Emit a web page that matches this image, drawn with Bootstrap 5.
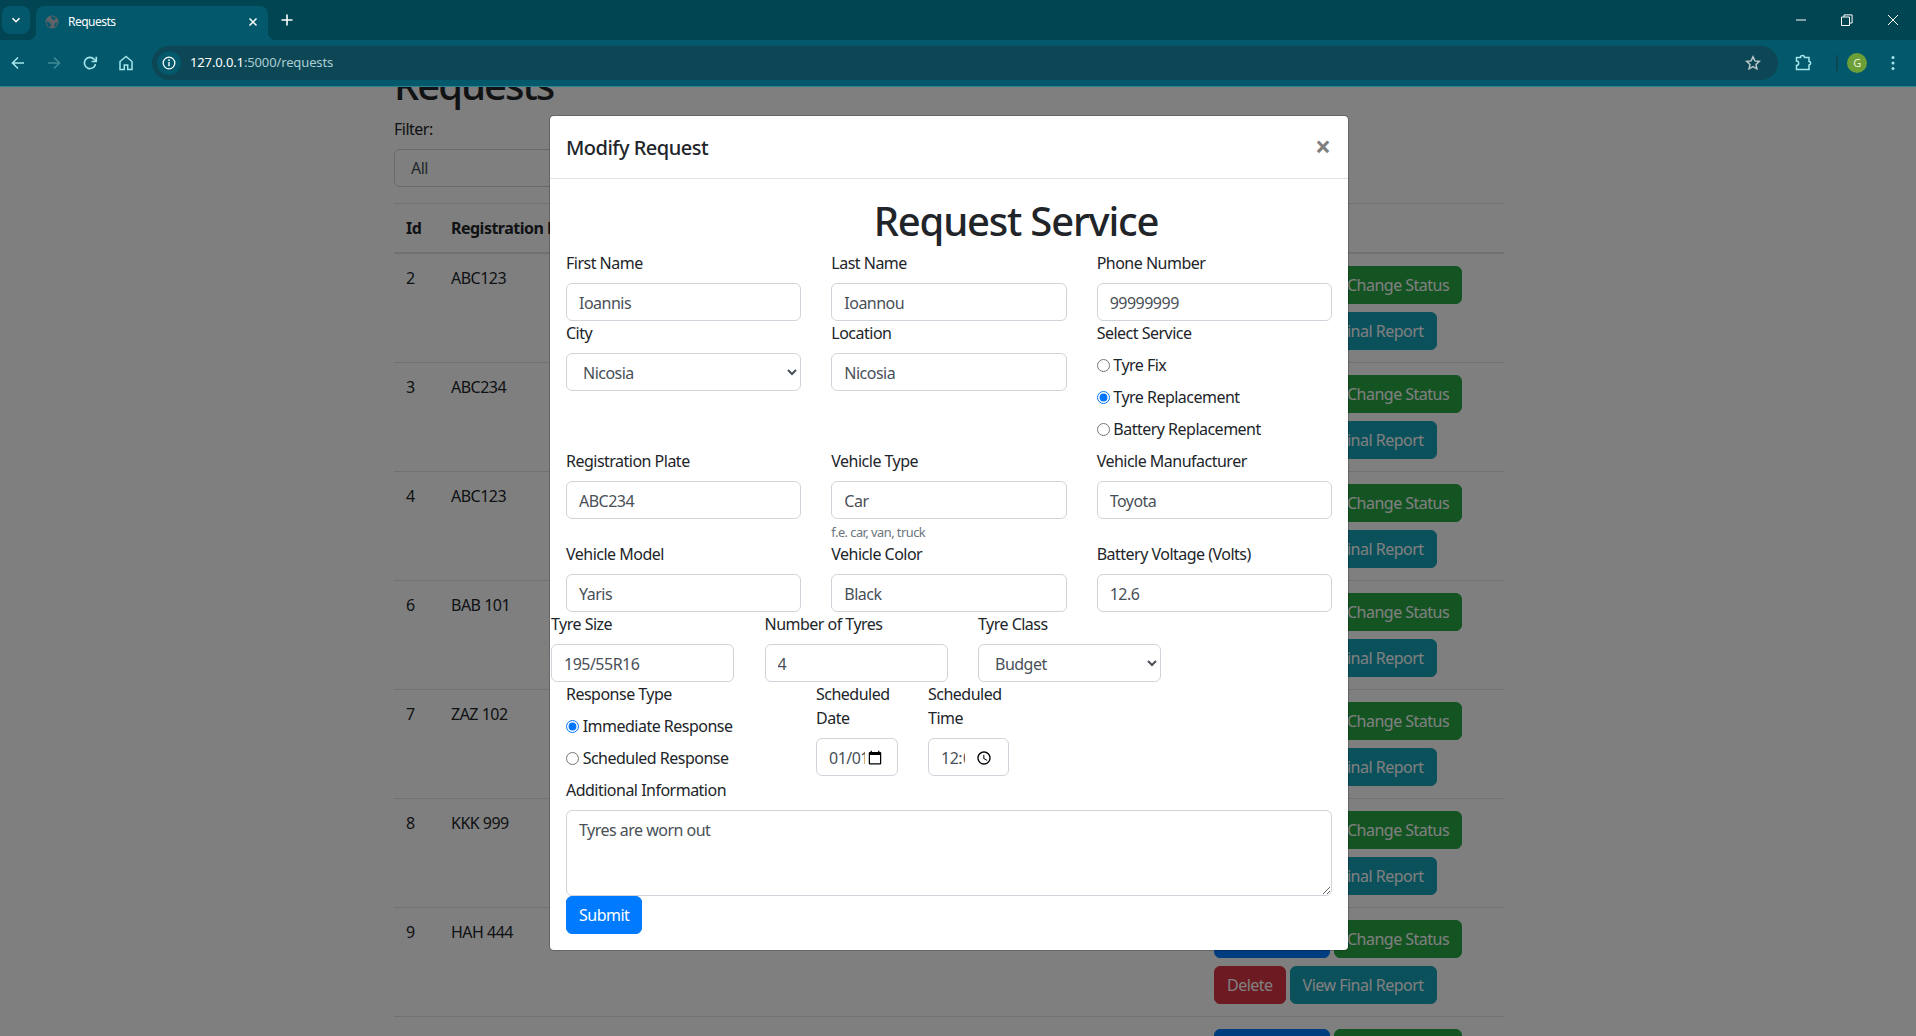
<!DOCTYPE html>
<html lang="en">
<head>
  <meta charset="UTF-8" />
  <meta name="viewport" content="width=device-width, initial-scale=1.0"/>
  <title>Requests</title>
  <link href="https://cdn.jsdelivr.net/npm/bootstrap@5.3.2/dist/css/bootstrap.min.css" rel="stylesheet" />
  <style>
    :root {
      --bs-body-font-family: "Noto Sans", "Open Sans", sans-serif;
      --bs-body-color: #212529;
      --bs-border-radius: .25rem;
      --bs-border-color: #dee2e6;
    }
    html, body { height: 100%; overflow: hidden; }
    body { letter-spacing: -.032em; }
    .form-control, .btn { letter-spacing: inherit; }
    .btn { white-space: nowrap; }

    /* browser frame */
    .win-tabs { height: 40px; background: #024552; color: #fff; }
    .tab-toggle { width: 28px; height: 28px; margin: 6px 6px 0 2px; border-radius: 8px; background: #03586b; }
    .win-tab { width: 232px; height: 34px; margin-top: 6px; padding: 0 9px 3px 9px; background: #03586b; border-radius: 8px 8px 0 0; font-size: 12px; position: relative; }
    .win-tab::before, .win-tab::after { content: ""; position: absolute; bottom: 0; width: 8px; height: 8px; }
    .win-tab::before { left: -8px; background: radial-gradient(circle at 0 0, transparent 8px, #03586b 8.5px); }
    .win-tab::after { right: -8px; background: radial-gradient(circle at 100% 0, transparent 8px, #03586b 8.5px); }
    .tab-label { margin-left: 9px; }
    .new-tab { margin-left: 5px; width: 28px; margin-top: 13px; }
    .win-btn { width: 46px; height: 40px; }
    .win-bar { height: 47px; background: #03586b; border-bottom: 1px solid #2b8291; }
    .bar-btn { width: 36px; height: 36px; }
    .bar-btn.home { margin-right: 8px; }
    .omni { height: 34px; width: 1626px; padding: 0 17px 0 5px; border-radius: 17px; background: #0d4755; }
    .omni-info { width: 24px; height: 24px; border-radius: 50%; background: #03586b; margin-right: 9px; }
    .omni-url { font-size: 13px; color: #a9cdd3; letter-spacing: -.01em; }
    .omni-url b { font-weight: 400; color: #fff; }
    .puzzle-btn { margin-left: 7px; }
    .bar-sep { width: 2px; height: 16px; background: #0d4755; margin: 0 9px 0 15px; }
    .avatar { width: 20px; height: 20px; border-radius: 50%; background: #6c9f38; color: #e8f3d8; font-size: 11px; }

    /* page behind the dialog */
    .page-view { position: relative; height: 949px; overflow: hidden; background: #fff; }
    .page-inner { width: 1898px; margin-top: -26px; }
    .page-box { width: 1140px; margin: 0 auto; padding: 0 15px; }
    .page-title { font-size: 40px; font-weight: 500; margin-bottom: 8px; line-height: 48px; letter-spacing: -.05em; }
    .filter-box { width: 400px; margin-bottom: 16px; }
    .req-table { table-layout: fixed; width: 1110px; margin: 0; }
    .req-table th, .req-table td { padding: 12px; border-top: 1px solid #dee2e6; border-bottom: 0; }
    .req-table thead th { border-bottom: 2px solid #dee2e6; }
    .req-table tr:last-child td:not(:last-child) { padding-top: 15px; }
    .col-id { width: 45px; }
    .col-act { width: 302px; }
    .act-line { display: flex; gap: 4px; }
    .act-line + .act-line { margin-top: 8px; }
    .btn-blue { --bs-btn-bg: #007bff; --bs-btn-border-color: #007bff; --bs-btn-hover-bg: #0069d9; --bs-btn-hover-border-color: #0062cc; --bs-btn-color: #fff; }
    .btn-green { --bs-btn-bg: #28a745; --bs-btn-border-color: #28a745; --bs-btn-color: #fff; }
    .btn-red { --bs-btn-bg: #dc3545; --bs-btn-border-color: #dc3545; --bs-btn-color: #fff; }
    .btn-teal { --bs-btn-bg: #17a2b8; --bs-btn-border-color: #17a2b8; --bs-btn-color: #fff; }
    .btn-edit { width: 116px; }

    /* dialog */
    .page-shade { position: absolute; inset: 0; background: rgba(0,0,0,.5); }
    .req-modal { position: absolute; width: 1898px; overflow: hidden; --bs-modal-width: 800px; --bs-modal-margin: 28px; --bs-modal-border-radius: .3rem; --bs-modal-border-color: rgba(0,0,0,.2); --bs-modal-header-border-color: #dee2e6; }
    .req-modal .modal-dialog { margin-top: 28px; }
    .req-modal .modal-header { padding: 17px 16px 15px; }
    .req-modal .modal-title { font-size: 20px; font-weight: 500; line-height: 30px; }
    .close-x { font-size: 28px; line-height: 24px; font-weight: 700; color: #7f7f7f; background: none; border: 0; padding: 0; margin: -5px 1px 0 auto; }
    .form-heading { font-size: 40px; font-weight: 500; line-height: 48px; margin: 0 0 6px 134px; padding-top: 2px; box-sizing: content-box; text-align: center; letter-spacing: -.03em; }
    .req-row { --bs-gutter-x: 30px; }
    .modal-body .form-control { padding-top: 7px; padding-bottom: 5px; }
    .form-control { color: #495057; border-color: #ced4da; }
    select.native-sel { appearance: auto; -webkit-appearance: auto; }
    .radio-line { height: 32px; }
    .radio-line input { vertical-align: -1px; }
    .hint-text { display: block; margin-top: 4px; font-size: 12.8px; line-height: 19px; color: #6c757d; }
    .tyre-row { display: flex; gap: 30.5px; margin-left: -15px; }
    .tyre-cell { width: 183px; }
    .sched-left { flex: 0 0 250px; padding-left: 15px; }
    .sched-date { flex: 0 0 112px; padding: 0 15px; min-width: 0; }
    .sched-time { flex: 0 0 111px; padding: 0 15px; min-width: 0; }
    .sched-row { margin-left: -15px; }
    .submit-btn { display: block; }
    textarea.form-control { height: 86px; }
  </style>
</head>
<body>
  <!-- browser frame -->
  <div class="win-tabs d-flex align-items-start">
    <div class="tab-toggle d-flex align-items-center justify-content-center">
      <svg width="12" height="12" viewBox="0 0 12 12"><path d="M2.5 4.2 6 7.7l3.5-3.5" fill="none" stroke="#fff" stroke-width="1.6"/></svg>
    </div>
    <div class="win-tab d-flex align-items-center">
      <svg width="14" height="14" viewBox="0 0 14 14"><circle cx="7" cy="7" r="6.5" fill="#5f6368"/><path d="M6 1.2C8 1 10 2 11 3.4L9 5 7.4 4.4 6.4 3ZM1.6 6l3 1.4L6 9.5 5 12.4C2.8 11.6 1.3 9 1.6 6ZM10 8l2.4-.6C12 9.6 10.8 11.2 9.2 12Z" fill="#03586b"/></svg>
      <span class="tab-label flex-grow-1">Requests</span>
      <svg width="12" height="12" viewBox="0 0 12 12"><path d="M2.5 2.5l7 7M9.5 2.5l-7 7" stroke="#fff" stroke-width="1.5"/></svg>
    </div>
    <div class="new-tab d-flex align-items-center justify-content-center">
      <svg width="14" height="14" viewBox="0 0 14 14"><path d="M7 1.5v11M1.5 7h11" stroke="#fff" stroke-width="1.6"/></svg>
    </div>
    <div class="ms-auto d-flex">
      <div class="win-btn d-flex align-items-center justify-content-center">
        <svg width="12" height="12" viewBox="0 0 12 12"><path d="M1 6h10" stroke="#fff"/></svg>
      </div>
      <div class="win-btn d-flex align-items-center justify-content-center">
        <svg width="12" height="12" viewBox="0 0 12 12"><path d="M.5 3h8v8.500h-8zM3 3V.9h8.100V9H8.500" fill="none" stroke="#fff"/></svg>
      </div>
      <div class="win-btn d-flex align-items-center justify-content-center">
        <svg width="12" height="12" viewBox="0 0 12 12"><path d="M1 1l10 10M11 1 1 11" stroke="#fff"/></svg>
      </div>
    </div>
  </div>
  <div class="win-bar d-flex align-items-center">
    <div class="bar-btn d-flex align-items-center justify-content-center">
      <svg width="16" height="16" viewBox="0 0 16 16"><path d="M14 8H3M8 2.500 2.500 8 8 13.500" fill="none" stroke="#a4e6ec" stroke-width="1.600"/></svg>
    </div>
    <div class="bar-btn d-flex align-items-center justify-content-center">
      <svg width="16" height="16" viewBox="0 0 16 16"><path d="M2 8h11M8 2.500 13.500 8 8 13.500" fill="none" stroke="#3f8a96" stroke-width="1.600"/></svg>
    </div>
    <div class="bar-btn d-flex align-items-center justify-content-center">
      <svg width="16" height="16" viewBox="0 0 16 16"><path d="M13.500 9a5.600 5.600 0 1 1-1.400-4.800L14 6" fill="none" stroke="#a4e6ec" stroke-width="1.600"/><path d="M14.300 1.800V6.500H9.600" fill="none" stroke="#a4e6ec" stroke-width="1.600"/></svg>
    </div>
    <div class="bar-btn home d-flex align-items-center justify-content-center">
      <svg width="16" height="16" viewBox="0 0 16 16"><path d="M8 1.500 2 6.500V14.500h4.300V10h3.400v4.500H14V6.500Z" fill="none" stroke="#a4e6ec" stroke-width="1.500"/></svg>
    </div>
    <div class="omni d-flex align-items-center">
      <div class="omni-info d-flex align-items-center justify-content-center">
        <svg width="14" height="14" viewBox="0 0 14 14"><circle cx="7" cy="7" r="5.800" fill="none" stroke="#fff" stroke-width="1.300"/><path d="M7 6v4.200" stroke="#fff" stroke-width="1.400"/><circle cx="7" cy="4.200" r=".9" fill="#fff"/></svg>
      </div>
      <span class="omni-url flex-grow-1"><b>127.0.0.1</b>:5000/requests</span>
      <svg width="16" height="16" viewBox="0 0 16 16"><path d="m8 1.800 1.900 4.100 4.400.5-3.300 3 .9 4.400L8 11.600l-3.900 2.200.9-4.400-3.300-3 4.400-.5Z" fill="none" stroke="#b9c6ca" stroke-width="1.500"/></svg>
    </div>
    <div class="bar-btn puzzle-btn d-flex align-items-center justify-content-center">
      <svg width="18" height="18" viewBox="0 0 18 18"><path d="M2.500 3.500H6.500a2 2 0 0 1 4 0H15V7.500a1.700 1.700 0 0 1 0 3.400V15.500H2.500V11.500a2.200 2.200 0 0 0 0-4.400Z" fill="none" stroke="#a4e6ec" stroke-width="1.500"/></svg>
    </div>
    <div class="bar-sep"></div>
    <div class="avatar d-flex align-items-center justify-content-center">G</div>
    <div class="bar-btn d-flex align-items-center justify-content-center ms-2">
      <svg width="16" height="16" viewBox="0 0 16 16"><circle cx="8" cy="2.500" r="1.500" fill="#a4e6ec"/><circle cx="8" cy="8" r="1.500" fill="#a4e6ec"/><circle cx="8" cy="13.500" r="1.500" fill="#a4e6ec"/></svg>
    </div>
  </div>

  <div class="page-view">
    <!-- page behind the dialog -->
    <div class="page-inner">
      <div class="page-box">
        <h1 class="page-title">Requests</h1>
        <div class="filter-box">
          <label class="form-label">Filter:</label>
          <select class="form-control native-sel"><option>All</option></select>
        </div>
        <table class="table req-table" id="reqTable">
          <colgroup><col class="col-id"><col><col><col><col class="col-act"></colgroup>
          <thead><tr><th>Id</th><th>Registration Plate</th><th>Service</th><th>Response</th><th>Actions</th></tr></thead>
          <tbody id="reqRows"></tbody>
        </table>
      </div>
    </div>
    <div class="page-shade"></div>

    <!-- dialog -->
    <div class="modal d-block req-modal">
      <div class="modal-dialog modal-lg">
        <div class="modal-content">
          <div class="modal-header">
            <h5 class="modal-title">Modify Request</h5>
            <button type="button" class="close-x">&times;</button>
          </div>
          <div class="modal-body">
            <h1 class="form-heading">Request Service</h1>
            <form>
              <div class="row req-row">
                <div class="col-4"><label class="form-label">First Name</label><input class="form-control" value="Ioannis"></div>
                <div class="col-4"><label class="form-label">Last Name</label><input class="form-control" value="Ioannou"></div>
                <div class="col-4"><label class="form-label">Phone Number</label><input class="form-control" value="99999999"></div>
              </div>
              <div class="row req-row">
                <div class="col-4"><label class="form-label">City</label><select class="form-control native-sel"><option>Nicosia</option></select></div>
                <div class="col-4"><label class="form-label">Location</label><input class="form-control" value="Nicosia"></div>
                <div class="col-4">
                  <label class="form-label">Select Service</label>
                  <div class="radio-line"><input type="radio" name="svc"> <label>Tyre Fix</label></div>
                  <div class="radio-line"><input type="radio" name="svc" checked> <label>Tyre Replacement</label></div>
                  <div class="radio-line"><input type="radio" name="svc"> <label>Battery Replacement</label></div>
                </div>
              </div>
              <div class="row req-row">
                <div class="col-4"><label class="form-label">Registration Plate</label><input class="form-control" value="ABC234"></div>
                <div class="col-4"><label class="form-label">Vehicle Type</label><input class="form-control" value="Car"><small class="hint-text">f.e. car, van, truck</small></div>
                <div class="col-4"><label class="form-label">Vehicle Manufacturer</label><input class="form-control" value="Toyota"></div>
              </div>
              <div class="row req-row">
                <div class="col-4"><label class="form-label">Vehicle Model</label><input class="form-control" value="Yaris"></div>
                <div class="col-4"><label class="form-label">Vehicle Color</label><input class="form-control" value="Black"></div>
                <div class="col-4"><label class="form-label">Battery Voltage (Volts)</label><input class="form-control" value="12.6"></div>
              </div>
              <div class="tyre-row">
                <div class="tyre-cell"><label class="form-label">Tyre Size</label><input class="form-control" value="195/55R16"></div>
                <div class="tyre-cell"><label class="form-label">Number of Tyres</label><input class="form-control" value="4"></div>
                <div class="tyre-cell"><label class="form-label">Tyre Class</label><select class="form-control native-sel"><option>Budget</option></select></div>
              </div>
              <div class="d-flex sched-row">
                <div class="sched-left">
                  <label class="form-label">Response Type</label>
                  <div class="radio-line"><input type="radio" name="resp" checked> <label>Immediate Response</label></div>
                  <div class="radio-line"><input type="radio" name="resp"> <label>Scheduled Response</label></div>
                </div>
                <div class="sched-date"><label class="form-label">Scheduled Date</label><input type="date" class="form-control" value="2024-01-01"></div>
                <div class="sched-time"><label class="form-label">Scheduled Time</label><input type="time" class="form-control" value="12:00"></div>
              </div>
              <label class="form-label">Additional Information</label>
              <textarea class="form-control">Tyres are worn out</textarea>
              <button type="button" class="btn btn-blue submit-btn">Submit</button>
            </form>
          </div>
        </div>
      </div>
    </div>
  </div>

  <script>
    const rows = [
      [2, "ABC123"], [3, "ABC234"], [4, "ABC123"], [6, "BAB 101"],
      [7, "ZAZ 102"], [8, "KKK 999"], [9, "HAH 444"], [10, "TTT 555"]
    ];
    document.getElementById("reqRows").innerHTML = rows.map(r => `
      <tr>
        <td>${r[0]}</td><td>${r[1]}</td><td>Tyre Fix</td><td>Immediate</td>
        <td>
          <div class="act-line"><button class="btn btn-blue btn-edit">Edit Request</button><button class="btn btn-green">Change Status</button></div>
          <div class="act-line"><button class="btn btn-red">Delete</button><button class="btn btn-teal">View Final Report</button></div>
        </td>
      </tr>`).join("");
  </script>
</body>
</html>
